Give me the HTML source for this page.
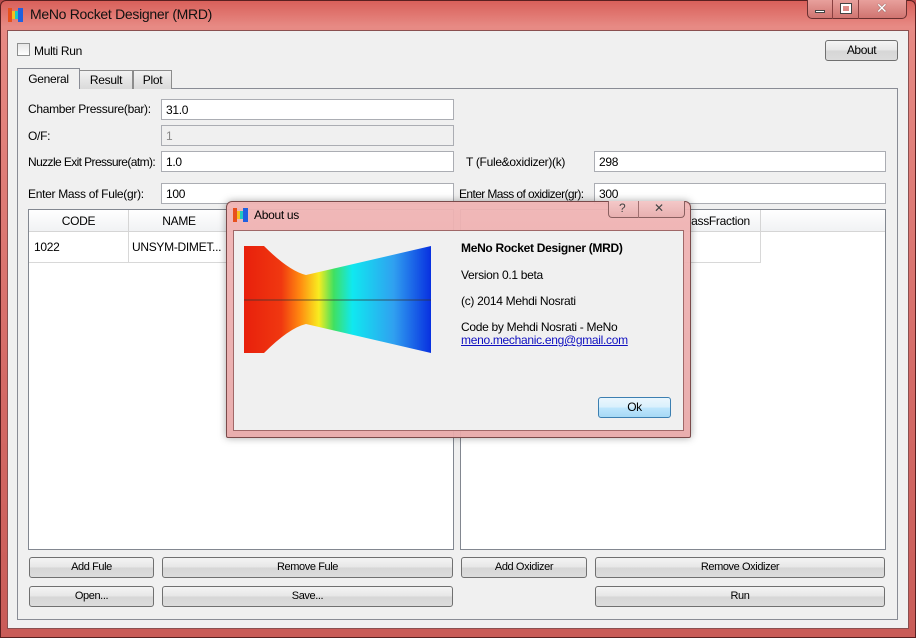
<!DOCTYPE html>
<html><head><style>
*{box-sizing:border-box;margin:0;padding:0}
body{width:916px;height:638px;overflow:hidden;font-family:"Liberation Sans","DejaVu Sans",sans-serif;font-size:12px;letter-spacing:-0.3px;color:#000;background:#b84a4a;position:relative}
.abs{position:absolute}
.frame{left:0;top:0;width:916px;height:638px;background:linear-gradient(180deg,#d9605a 0%,#e78a84 4%,#d46a66 60%,#c95c58 100%);border:1px solid #5a2020;border-radius:6px 6px 0 0}
.client{left:7px;top:30px;width:902px;height:599px;background:#f0f0f0;border:1px solid #8a5050}
.inp{background:#fff;border:1px solid #abadb3;height:21px;padding:3px 0 0 4px;font-size:12px}
.btn{border:1px solid #707070;border-radius:3px;background:linear-gradient(#f4f4f4,#e6e6e6 50%,#d6d6d6 51%,#dcdcdc);text-align:center;font-size:11px;line-height:19px;height:21px;letter-spacing:-0.4px}
.tab{border:1px solid #8c8c8c;border-bottom:none;background:linear-gradient(#f2f2f2,#dadada);height:19px;text-align:center;line-height:18px}
.lbl{font-size:12px}
.tbl{background:#fff;border:1px solid #828790}
.th{background:linear-gradient(#fff,#f1f2f4);border-bottom:1px solid #d5d5d5;height:22px}
.cap{font-size:12px;text-align:center;line-height:22px;position:absolute;top:0}
</style></head><body>
<div class="abs frame"></div>
<div class="abs" style="left:8px;top:7px;width:16px;height:16px">
<svg width="16" height="16"><rect x="0" y="1" width="4" height="14" fill="#e8501c"/><rect x="4" y="4" width="3" height="8" fill="#f4c020"/><rect x="7" y="4" width="3" height="8" fill="#20c8c0"/><rect x="10" y="1" width="5" height="14" fill="#2060e0"/></svg></div>
<div class="abs" style="left:30px;top:6px;font-size:14px;color:#111">MeNo Rocket Designer (MRD)</div>
<div class="abs" style="left:807px;top:0;width:100px;height:19px;border:1px solid #6a3030;border-top:none;border-radius:0 0 5px 5px;background:linear-gradient(#e8a09c,#d07470)"></div>
<div class="abs" style="left:807px;top:0;width:26px;height:19px;border-right:1px solid #8a4040"></div>
<div class="abs" style="left:833px;top:0;width:26px;height:19px;border-right:1px solid #8a4040"></div>
<div class="abs" style="left:815px;top:10px;width:10px;height:3px;background:#fff;border:1px solid #444"></div>
<div class="abs" style="left:841px;top:4px;width:10px;height:9px;border:2px solid #fff;outline:1px solid #444"></div>
<div class="abs" style="left:876px;top:0px;color:#fff;font-weight:bold;font-size:14px;text-shadow:0 0 1px #333">✕</div>

<div class="abs client"></div>
<div class="abs" style="left:17px;top:43px;width:13px;height:13px;border:1px solid #8e8f8f;background:linear-gradient(#e6e6e6,#fff)"></div>
<div class="abs lbl" style="left:34px;top:44px">Multi Run</div>
<div class="abs btn" style="left:825px;top:40px;width:73px;font-size:12px">About</div>

<div class="abs" style="left:17px;top:88px;width:881px;height:532px;border:1px solid #898c95;background:#fff"></div>
<div class="abs" style="left:18px;top:89px;width:879px;height:530px;background:#f0f0f0"></div>
<div class="abs tab" style="left:79px;top:70px;width:54px">Result</div>
<div class="abs tab" style="left:133px;top:70px;width:39px">Plot</div>
<div class="abs" style="left:17px;top:68px;width:63px;height:21px;border:1px solid #898c95;border-bottom:none;background:#f0f0f0;text-align:center;line-height:20px">General</div>

<div class="abs lbl" style="left:28px;top:102px">Chamber Pressure(bar):</div>
<div class="abs inp" style="left:161px;top:99px;width:293px">31.0</div>
<div class="abs lbl" style="left:28px;top:129px">O/F:</div>
<div class="abs inp" style="left:161px;top:125px;width:293px;background:#f0f0f0;color:#888">1</div>
<div class="abs lbl" style="left:28px;top:155px;letter-spacing:-0.6px">Nuzzle Exit Pressure(atm):</div>
<div class="abs inp" style="left:161px;top:151px;width:293px">1.0</div>
<div class="abs lbl" style="left:466px;top:155px">T (Fule&amp;oxidizer)(k)</div>
<div class="abs inp" style="left:594px;top:151px;width:292px">298</div>
<div class="abs lbl" style="left:28px;top:187px">Enter Mass of Fule(gr):</div>
<div class="abs inp" style="left:161px;top:183px;width:293px">100</div>
<div class="abs lbl" style="left:459px;top:187px;letter-spacing:-0.6px">Enter Mass of oxidizer(gr):</div>
<div class="abs inp" style="left:594px;top:183px;width:292px">300</div>

<div class="abs tbl" style="left:28px;top:209px;width:426px;height:341px">
 <div class="th" style="position:relative">
  <div class="cap" style="left:0;width:100px;border-right:1px solid #d5d5d5">CODE</div>
  <div class="cap" style="left:100px;width:100px">NAME</div>
 </div>
 <div style="position:relative;height:31px;width:300px;border-bottom:1px solid #d8d8d8">
  <div class="abs" style="left:0;top:0;width:100px;height:31px;border-right:1px solid #d8d8d8;padding:8px 0 0 5px">1022</div>
  <div class="abs" style="left:103px;top:8px">UNSYM-DIMET...</div>
 </div>
</div>
<div class="abs tbl" style="left:460px;top:209px;width:426px;height:341px">
 <div class="th" style="position:relative"><div class="cap" style="left:220px;width:80px;border-right:1px solid #d5d5d5">assFraction</div></div>
 <div style="height:31px;width:300px;border-right:1px solid #d8d8d8;border-bottom:1px solid #d8d8d8"></div>
</div>

<div class="abs btn" style="left:29px;top:557px;width:125px">Add Fule</div>
<div class="abs btn" style="left:162px;top:557px;width:291px">Remove Fule</div>
<div class="abs btn" style="left:461px;top:557px;width:126px">Add Oxidizer</div>
<div class="abs btn" style="left:595px;top:557px;width:290px">Remove Oxidizer</div>
<div class="abs btn" style="left:29px;top:586px;width:125px">Open...</div>
<div class="abs btn" style="left:162px;top:586px;width:291px">Save...</div>
<div class="abs btn" style="left:595px;top:586px;width:290px">Run</div>

<div class="abs" style="left:226px;top:201px;width:465px;height:237px;border:1px solid #7a4a4a;border-radius:6px 6px 2px 2px;background:linear-gradient(180deg,rgba(240,180,180,0.95),rgba(232,170,170,0.95));box-shadow:0 0 8px rgba(0,0,0,0.35)"></div>
<div class="abs" style="left:233px;top:207px;width:16px;height:16px">
<svg width="16" height="16"><rect x="0" y="1" width="4" height="14" fill="#e8501c"/><rect x="4" y="4" width="3" height="8" fill="#f4c020"/><rect x="7" y="4" width="3" height="8" fill="#20c8c0"/><rect x="10" y="1" width="5" height="14" fill="#2060e0"/></svg></div>
<div class="abs" style="left:254px;top:208px;font-size:12px">About us</div>
<div class="abs" style="left:608px;top:201px;width:77px;height:17px;border:1px solid #8a6060;border-top:none;border-radius:0 0 4px 4px;background:linear-gradient(#f4c8c8,#e8b0b0)"></div>
<div class="abs" style="left:638px;top:201px;width:1px;height:17px;background:#a07070"></div>
<div class="abs" style="left:619px;top:201px;font-size:12px;color:#444">?</div>
<div class="abs" style="left:654px;top:201px;font-size:12px;color:#444">✕</div>
<div class="abs" style="left:233px;top:230px;width:451px;height:201px;background:#f0f0f0;border:1px solid #a06868"></div>
<svg class="abs" style="left:244px;top:246px" width="190" height="110" viewBox="0 0 190 110">
<defs>
<linearGradient id="g" x1="0" x2="1" y1="0" y2="0">
<stop offset="0" stop-color="#e8200c"/><stop offset="0.2" stop-color="#f03810"/><stop offset="0.3" stop-color="#ff8a10"/><stop offset="0.4" stop-color="#f8ec20"/><stop offset="0.48" stop-color="#40e060"/><stop offset="0.58" stop-color="#10e8f0"/><stop offset="0.8" stop-color="#30a0f0"/><stop offset="1" stop-color="#0830e0"/></linearGradient></defs>
<path d="M0 0 L20 0 Q45 25 62 29 L187 0 L187 107 L62 78 Q45 82 20 107 L0 107 Z" fill="url(#g)"/>
<line x1="0" y1="54" x2="187" y2="54" stroke="#333" stroke-width="0.7"/>
</svg>
<div class="abs" style="left:461px;top:241px;font-weight:bold;font-size:12px">MeNo Rocket Designer (MRD)</div>
<div class="abs" style="left:461px;top:268px">Version 0.1 beta</div>
<div class="abs" style="left:461px;top:294px">(c) 2014 Mehdi Nosrati</div>
<div class="abs" style="left:461px;top:320px">Code by Mehdi Nosrati - MeNo</div>
<div class="abs" style="left:461px;top:333px;color:#1010c0;text-decoration:underline">meno.mechanic.eng@gmail.com</div>
<div class="abs btn" style="left:598px;top:397px;width:73px;font-size:12px;border-color:#3c7fb1;background:linear-gradient(#eaf6fd,#d9f0fc 50%,#bee6fd 51%,#a7d9f5)">Ok</div>
</body></html>
